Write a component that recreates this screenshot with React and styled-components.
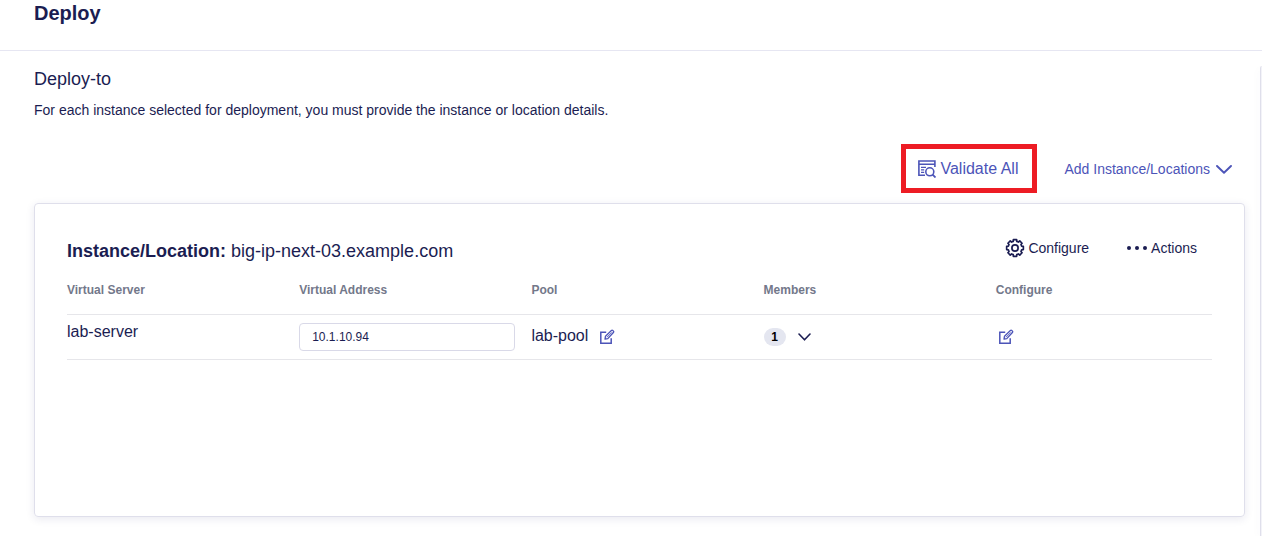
import React from "react";
import styled, { createGlobalStyle } from "styled-components";

const navy = "#1b1d52";
const indigo = "#4c54b8";

const GlobalStyle = createGlobalStyle`
  *, *::before, *::after { box-sizing: border-box; }
  body { margin: 0; background: #fff; overflow: hidden; }
  button { font: inherit; color: inherit; background: none; border: 0; padding: 0; }
  svg { display: block; flex: none; }
`;

const Page = styled.div`
  height: 536px;
  display: flex;
  flex-direction: column;
  color: ${navy};
  font-family: "Liberation Sans", Arial, sans-serif;
`;

const Header = styled.header`
  height: 51px;
  flex: none;
  padding: 1px 34px 0;
  border-bottom: 1px solid #e6e6f2;
`;

const Title = styled.h1`
  margin: 0;
  font-size: 20px;
  line-height: 24px;
`;

const Body = styled.div`
  flex: 1;
  min-height: 0;
  display: flex;
  justify-content: space-between;
`;

const Main = styled.main`
  width: 1211px;
  margin-left: 34px;
  padding-top: 16px;
`;

const SideEdge = styled.div`
  width: 2px;
  margin-top: 15px;
  border-left: 1px solid #dfdfeb;
  border-top-left-radius: 3px;
  background: #f3f3f8;
  box-shadow: 0 2px 10px rgba(40, 40, 110, 0.07);
`;

const Subtitle = styled.h2`
  margin: 0;
  font-size: 18px;
  line-height: 24px;
  font-weight: 400;
`;

const Description = styled.p`
  margin: 9px 0 0;
  font-size: 14px;
  line-height: 20px;
`;

const Toolbar = styled.div`
  margin-top: 24px;
  height: 49px;
  display: flex;
  justify-content: flex-end;
  align-items: center;
  gap: 27px;
  padding-right: 13px;
  color: ${indigo};
`;

const ValidateButton = styled.button`
  width: 136px;
  height: 49px;
  display: flex;
  align-items: center;
  gap: 4px;
  padding-left: 12px;
  border: 5px solid #ed1c24;
  font-size: 16px;
  color: ${indigo};
  white-space: nowrap;
`;

const MenuButton = styled.button`
  display: flex;
  align-items: center;
  gap: 6px;
  font-size: 14px;
  line-height: 20px;
  padding-top: 1px;
`;

const Card = styled.section`
  margin-top: 10px;
  height: 314px;
  padding: 32px 32px 0;
  border: 1px solid #dfdfeb;
  border-radius: 4px;
  box-shadow: 0 2px 8px rgba(40, 40, 110, 0.1);
`;

const CardHeader = styled.div`
  height: 30px;
  display: flex;
  justify-content: space-between;
  align-items: flex-start;
`;

const InstanceTitle = styled.h3`
  margin: 0;
  padding-top: 3px;
  font-size: 18px;
  line-height: 24px;
  font-weight: 400;
`;

const CardActions = styled.div`
  display: flex;
  gap: 38px;
  padding-right: 15px;
`;

const CardAction = styled.button`
  display: flex;
  align-items: center;
  gap: ${(p) => p.$gap}px;
  height: 24px;
  font-size: 14px;
`;

const Row = styled.div`
  display: grid;
  grid-template-columns: repeat(5, 1fr);
  column-gap: 16px;
  border-bottom: 1px solid #e6e6ea;
`;

const HeadRow = styled(Row)`
  height: 49px;
  padding-top: 16px;
`;

const HeadCell = styled.div`
  font-size: 12px;
  line-height: 16px;
  font-weight: 700;
  color: #73788a;
`;

const DataRow = styled(Row)`
  height: 45px;
  font-size: 16px;
  line-height: 20px;
`;

const Cell = styled.div`
  display: flex;
  align-items: flex-start;
  padding-top: ${(p) => p.$top}px;
  padding-left: ${(p) => p.$left || 0}px;
  gap: ${(p) => p.$gap || 0}px;
`;

const AddressInput = styled.input`
  width: 100%;
  height: 28px;
  padding: 0 12px;
  border: 1px solid #d9d9e8;
  border-radius: 4px;
  outline: 0;
  font: 12px "Liberation Sans", Arial, sans-serif;
  color: ${navy};
`;

const CountBadge = styled.span`
  width: 22px;
  height: 18px;
  border-radius: 9px;
  background: #e4e6f0;
  color: #000;
  font-size: 12px;
  line-height: 18px;
  font-weight: 700;
  text-align: center;
`;

const IconButton = styled.button`
  padding-top: ${(p) => p.$drop || 0}px;
  color: ${(p) => p.$color || indigo};
`;

const EditIcon = () => (
  <svg width="16" height="16" viewBox="0 0 16 16" fill="none" stroke="currentColor" strokeWidth="1.5">
    <path d="M7.2 3.3H1.8v11h10.4V9.2" />
    <path d="M6 10.2l.5-3 5.9-5.7a1 1 0 0 1 1.4 0l.6.6a1 1 0 0 1 0 1.4L8.8 9.6z" strokeWidth="1.3" strokeLinejoin="round" />
    <path d="M8 8.2l4.8-4.8" strokeWidth=".9" />
  </svg>
);

const ChevronIcon = ({ width, height, stroke }) => (
  <svg width={width} height={height} viewBox={`0 0 ${width} ${height}`} fill="none" stroke="currentColor" strokeWidth={stroke} strokeLinecap="round" strokeLinejoin="round">
    <path d={`M1 1L${width / 2} ${height - 1.2}L${width - 1} 1`} />
  </svg>
);

const ValidateIcon = () => (
  <svg width="18" height="18" viewBox="0 0 18 18" fill="none" stroke="currentColor" strokeWidth="1.6">
    <path d="M7 15.2H.9V1h16v6M.9 4.3h16" />
    <path d="M3 7.4h5M3 9.9h3.2M3 12.4h3.2" strokeWidth="1.3" />
    <circle cx="11.8" cy="11.8" r="4" />
    <path d="M14.6 14.6l2.9 2.9" strokeWidth="1.8" />
  </svg>
);

const gearTeeth = [0, 45, 90, 135, 180, 225, 270, 315];

const point = (radius, degrees) => {
  const angle = (degrees * Math.PI) / 180;
  return `${(10 + radius * Math.cos(angle)).toFixed(2)} ${(10 + radius * Math.sin(angle)).toFixed(2)}`;
};

const gearOutline =
  gearTeeth
    .map((a, i) => `${i ? "L" : "M"}${point(6.9, a - 15)}L${point(8.5, a - 11)}L${point(8.5, a + 11)}L${point(6.9, a + 15)}`)
    .join("") + "Z";

const GearIcon = () => (
  <svg width="20" height="20" viewBox="0 0 20 20" fill="none" stroke="currentColor" strokeWidth="1.7" strokeLinejoin="round">
    <path d={gearOutline} />
    <circle cx="10" cy="10" r="3.1" />
  </svg>
);

const DotsIcon = () => (
  <svg width="20" height="4" viewBox="0 0 20 4" fill="currentColor">
    <circle cx="2" cy="2" r="2" />
    <circle cx="10" cy="2" r="2" />
    <circle cx="18" cy="2" r="2" />
  </svg>
);

const columns = ["Virtual Server", "Virtual Address", "Pool", "Members", "Configure"];

export default function App() {
  return (
    <Page>
      <GlobalStyle />
      <Header>
        <Title>Deploy</Title>
      </Header>
      <Body>
        <Main>
          <Subtitle>Deploy-to</Subtitle>
          <Description>
            For each instance selected for deployment, you must provide the instance or location details.
          </Description>
          <Toolbar>
            <ValidateButton>
              <ValidateIcon />
              Validate All
            </ValidateButton>
            <MenuButton>
              Add Instance/Locations
              <ChevronIcon width={16} height={9} stroke={1.9} />
            </MenuButton>
          </Toolbar>
          <Card>
            <CardHeader>
              <InstanceTitle>
                <strong>Instance/Location:</strong> big-ip-next-03.example.com
              </InstanceTitle>
              <CardActions>
                <CardAction $gap={3}>
                  <GearIcon />
                  Configure
                </CardAction>
                <CardAction $gap={4}>
                  <DotsIcon />
                  Actions
                </CardAction>
              </CardActions>
            </CardHeader>
            <HeadRow>
              {columns.map((name) => (
                <HeadCell key={name}>{name}</HeadCell>
              ))}
            </HeadRow>
            <DataRow>
              <Cell $top={7}>lab-server</Cell>
              <Cell $top={8}>
                <AddressInput defaultValue="10.1.10.94" aria-label="Virtual Address" />
              </Cell>
              <Cell $top={11} $gap={11}>
                lab-pool
                <IconButton $drop={3} aria-label="Edit pool">
                  <EditIcon />
                </IconButton>
              </Cell>
              <Cell $top={13} $gap={12}>
                <CountBadge>1</CountBadge>
                <IconButton $drop={5} $color={navy} aria-label="Show members">
                  <ChevronIcon width={13} height={8} stroke={1.6} />
                </IconButton>
              </Cell>
              <Cell $top={14} $left={2}>
                <IconButton aria-label="Configure server">
                  <EditIcon />
                </IconButton>
              </Cell>
            </DataRow>
          </Card>
        </Main>
        <SideEdge />
      </Body>
    </Page>
  );
}
